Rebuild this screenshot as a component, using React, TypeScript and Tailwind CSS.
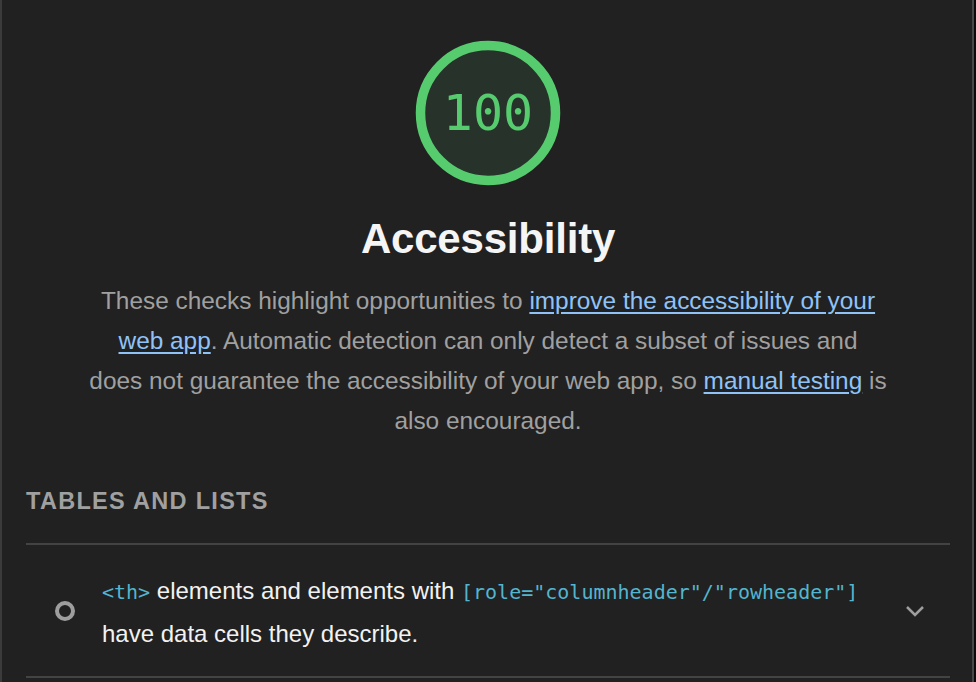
import React from 'react';

const Gauge: React.FC<{ score: number }> = ({ score }) => (
  <div className="relative w-[146px] h-[146px]">
    <svg width="146" height="146" viewBox="0 0 146 146" className="absolute inset-0">
      <circle cx="73" cy="73" r="67.5" fill="#27332a" stroke="#57cc6f" strokeWidth="9.5" />
    </svg>
    <div className="absolute inset-0 flex items-center justify-center text-[50px] leading-none text-[#57cc6f] font-['DejaVu_Sans_Mono',monospace]">
      {score}
    </div>
  </div>
);

const Code: React.FC<{ children: React.ReactNode }> = ({ children }) => (
  <code className="font-['DejaVu_Sans_Mono',monospace] text-[20px] text-[#53b5cf]">{children}</code>
);

export default function App() {
  return (
    <div className="w-[976px] h-[682px] overflow-hidden bg-[#212121] flex font-['Liberation_Sans',Arial,sans-serif]">
      <div className="w-[2px] bg-[#3b3b3b] shrink-0" />
      <div className="flex-1 flex flex-col pl-[24px] pr-[22px]">
        <div className="flex flex-col items-center pt-[40px]">
          <Gauge score={100} />
          <h1 className="mt-[29px] text-[42px] leading-[48px] font-bold text-[#f5f5f5] tracking-[-0.2px]">Accessibility</h1>
          <p className="mt-[18px] w-[860px] text-center text-[24.4px] leading-[40px] text-[#a0a0a0]">
            These checks highlight opportunities to{' '}
            <a className="text-[#8fc3f8] underline underline-offset-[3px]">improve the accessibility of your<br />web app</a>.
            Automatic detection can only detect a subset of issues and
            <br />
            does not guarantee the accessibility of your web app, so{' '}
            <a className="text-[#8fc3f8] underline underline-offset-[3px]">manual testing</a> is
            <br />
            also encouraged.
          </p>
        </div>
        <h2 className="mt-[47px] text-[23.5px] leading-[26px] font-bold tracking-[1.3px] text-[#a0a0a0]">TABLES AND LISTS</h2>
        <div className="mt-[29px] border-t-2 border-[#434343]">
          <div className="flex items-center h-[133px] border-b-2 border-[#434343]">
            <div className="w-[76px] shrink-0 flex justify-center pl-[2px]">
              <svg width="22" height="22" viewBox="0 0 22 22">
                <circle cx="11" cy="11" r="8" fill="none" stroke="#9e9e9e" strokeWidth="4" />
              </svg>
            </div>
            <div className="flex-1 mt-[3px] text-[24px] leading-[42px] text-[#f2f2f2]">
              <Code>&lt;th&gt;</Code> elements and elements with <Code>[role="columnheader"/"rowheader"]</Code>
              <br />
              have data cells they describe.
            </div>
            <div className="w-[70px] shrink-0 flex justify-center">
              <svg width="22" height="14" viewBox="0 0 22 14">
                <path d="M3 3 L11 11 L19 3" fill="none" stroke="#9e9e9e" strokeWidth="2.5" />
              </svg>
            </div>
          </div>
        </div>
      </div>
      <div className="w-[2px] bg-[#474747] shrink-0" />
      <div className="w-[2px] bg-[#0b0b0b] shrink-0" />
    </div>
  );
}
